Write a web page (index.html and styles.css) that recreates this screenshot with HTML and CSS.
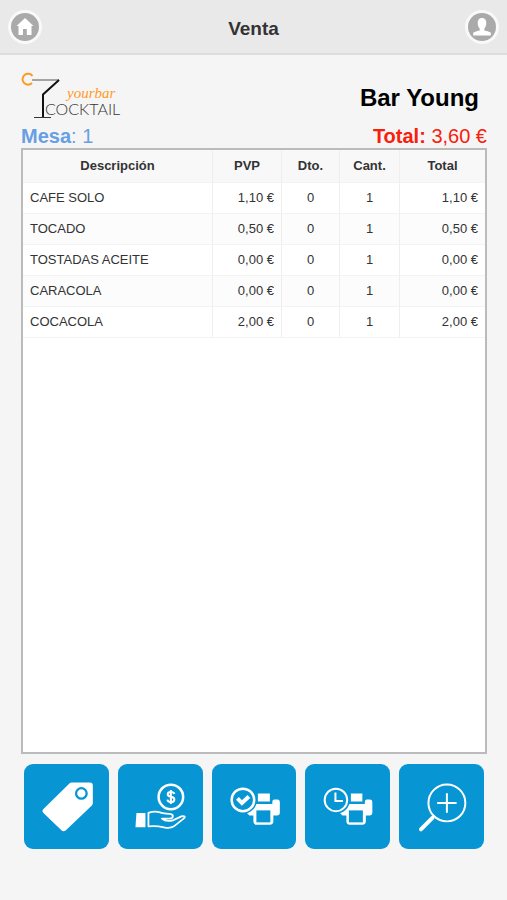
FILE: index.html
```html
<!DOCTYPE html>
<html lang="es">
<head>
    <meta charset="utf-8">
    <meta name="viewport" content="width=device-width, initial-scale=1">
    <title>Venta</title>
    <link rel="stylesheet" href="styles.css">
</head>
<body>
    <header class="top-bar">
        <a href="#" class="round-btn" aria-label="Inicio">
            <svg viewBox="0 0 34 34">
                <circle cx="17" cy="17" r="17" fill="#f9f9f9"/>
                <circle cx="17" cy="17" r="14" fill="#aaa"/>
                <path fill="#fff" d="M17 8 L25.500 16 H23.500 V25 H18.800 V19 H15 V25 H10.500 V16 H8.500 Z"/>
            </svg>
        </a>
        <h1>Venta</h1>
        <a href="#" class="round-btn" aria-label="Usuario">
            <svg viewBox="0 0 34 34">
                <circle cx="17" cy="17" r="17" fill="#f9f9f9"/>
                <circle cx="17" cy="17" r="14" fill="#aaa"/>
                <path fill="#fff" d="M17 8 C20 8 21.400 10 21.300 13 C21.200 16 20.300 17.500 19.300 18.600 V20.500 C22.500 21.300 25.600 21.900 25.800 23 V25.500 H8.200 V23 C8.400 21.900 11.500 21.300 14.700 20.500 V18.600 C13.700 17.500 12.800 16 12.700 13 C12.600 10 14 8 17 8 Z"/>
            </svg>
        </a>
    </header>

    <main class="sale">
        <div class="brand">
            <svg class="logo" viewBox="0 0 104 48" role="img" aria-label="Yourbar Cocktail">
                <path d="M11.500 4 A5.500 5.500 0 1 0 11 11" fill="none" stroke="#ff9a1f" stroke-width="2"/>
                <path d="M11 8 H38" fill="none" stroke="#555" stroke-width="1"/>
                <path d="M38 8 L22 22.500 V45" fill="none" stroke="#111" stroke-width="2"/>
                <path d="M13 45.500 H30" fill="none" stroke="#333" stroke-width="1"/>
                <text x="24" y="43" class="logo-name">COCKTAIL</text>
                <text x="46" y="26" class="logo-script">yourbar</text>
            </svg>
            <h2>Bar Young</h2>
        </div>

        <div class="summary">
            <div class="mesa"><b>Mesa</b>: 1</div>
            <div class="total"><b>Total:</b> 3,60 €</div>
        </div>

        <div class="lines">
            <table>
                <thead>
                    <tr>
                        <th class="col-desc">Descripción</th>
                        <th class="col-pvp">PVP</th>
                        <th class="col-dto">Dto.</th>
                        <th class="col-cant">Cant.</th>
                        <th class="col-total">Total</th>
                    </tr>
                </thead>
                <tbody>
                    <tr><td>CAFE SOLO</td><td>1,10 €</td><td>0</td><td>1</td><td>1,10 €</td></tr>
                    <tr><td>TOCADO</td><td>0,50 €</td><td>0</td><td>1</td><td>0,50 €</td></tr>
                    <tr><td>TOSTADAS ACEITE</td><td>0,00 €</td><td>0</td><td>1</td><td>0,00 €</td></tr>
                    <tr><td>CARACOLA</td><td>0,00 €</td><td>0</td><td>1</td><td>0,00 €</td></tr>
                    <tr><td>COCACOLA</td><td>2,00 €</td><td>0</td><td>1</td><td>2,00 €</td></tr>
                </tbody>
            </table>
        </div>

        <div class="actions">
            <button type="button" aria-label="Productos">
                <svg viewBox="0 0 85 85">
                    <path fill="#fff" d="M48 18.500 H66 Q69 18.500 69 21.500 V39 Q69 40.500 68 41.500 L42 66.500 Q39.500 68.500 37.500 66.500 L19.500 49 Q17.500 47 19.500 45 L45.500 19.500 Q46.500 18.500 48 18.500 Z"/>
                    <circle cx="57.500" cy="29.500" r="5.300" fill="#fff" stroke="#0795d4" stroke-width="2.300"/>
                </svg>
            </button>
            <button type="button" aria-label="Cobrar">
                <svg viewBox="0 0 85 85" fill="none" stroke="#fff">
                    <circle cx="53" cy="33" r="12.300" stroke-width="2.500"/>
                    <path stroke-width="2" d="M56.500 30 C56 28.300 54.700 28 53 28 C51 28 49.800 29 49.800 30.400 C49.800 34 56.500 31.800 56.500 35.500 C56.500 37.300 55 38.200 53 38.200 C51 38.200 49.800 37.300 49.500 35.700 M53 26 V40"/>
                    <path fill="#fff" stroke="none" d="M18.500 49 H27.500 V63.500 H17.500 Z"/>
                    <path stroke-width="1.800" stroke-linejoin="round" stroke-linecap="round" d="M30.500 49 C35 47.500 38.500 47.500 42 48.500 C45 50 48.500 49.500 52 50 C56 50.500 56 54.500 52 54.800 H44 C47 57.500 51 57.500 55 56.500 L63.500 52.500 C67 51.500 68 53 65.500 55 L56 62.500 C53 64.500 50 64.500 46 63.500 C40 62 36 62 30.500 62.500 Z"/>
                </svg>
            </button>
            <button type="button" aria-label="Imprimir cuenta">
                <svg viewBox="0 0 85 85">
                    <path fill="#fff" d="M46 29.500 H58 V37.500 H46 Z M43 40 H60.500 V37.500 Q60.500 35.500 62.500 35.500 H65.500 Q68 35.500 68 38 V49 Q68 51.500 65.500 51.500 H61.500 V57.500 Q61.500 61 58 61 H45 Q41.500 61 41.500 57.500 V51.500 H37.500 L35 49 Z"/>
                    <rect x="44.500" y="46.500" width="14" height="12" fill="#0795d4"/>
                    <circle cx="31" cy="36" r="14" fill="#0795d4"/>
                    <circle cx="31" cy="36" r="11.300" fill="none" stroke="#fff" stroke-width="2.500"/>
                    <path fill="none" stroke="#fff" stroke-width="4" d="M25.500 34.500 L30 39 L37 32.500"/>
                </svg>
            </button>
            <button type="button" aria-label="Imprimir pendiente">
                <svg viewBox="0 0 85 85">
                    <path fill="#fff" d="M46 29.500 H57.500 V37.500 H46 Z M43 40 H60 V37.500 Q60 35.500 62 35.500 H65 Q67.500 35.500 67.500 38 V49 Q67.500 51.500 65 51.500 H61 V57.500 Q61 61 57.500 61 H45 Q41.500 61 41.500 57.500 V51.500 H37.500 L35 49 Z"/>
                    <rect x="44" y="46.500" width="14" height="12" fill="#0795d4"/>
                    <circle cx="31" cy="36" r="14" fill="#0795d4"/>
                    <circle cx="31" cy="36" r="11.300" fill="none" stroke="#fff" stroke-width="2"/>
                    <path fill="none" stroke="#fff" stroke-width="2" d="M30.500 28.500 V37 H38"/>
                </svg>
            </button>
            <button type="button" aria-label="Ver detalle">
                <svg viewBox="0 0 85 85" fill="none" stroke="#fff" stroke-linecap="round">
                    <circle cx="48" cy="39" r="18.500" stroke-width="2"/>
                    <path stroke-width="2" d="M48 30 V48 M39 39 H57"/>
                    <path stroke-width="1.500" d="M35 52 L33 54"/>
                    <path stroke-width="4" d="M33.500 54 L22 65.500"/>
                </svg>
            </button>
        </div>
    </main>
</body>
</html>
```

FILE: styles.css
```css
* {
    box-sizing: border-box;
}

body {
    font-family: "Liberation Sans", Helvetica, Arial, sans-serif;
    background-color: #f5f5f5;
    color: #333;
    margin: 0;
    min-height: 100vh;
    display: flex;
    flex-direction: column;
}

h1, h2 {
    margin: 0;
}

/* Cabecera */
.top-bar {
    display: flex;
    align-items: center;
    justify-content: space-between;
    height: 55px;
    padding: 0 8px;
    background-color: #e9e9e9;
    border-bottom: 2px solid #ddd;
}

.top-bar h1 {
    font-size: 19px;
    line-height: 24px;
    padding-top: 4px;
}

.round-btn {
    width: 34px;
    height: 34px;
}

.round-btn svg {
    display: block;
    width: 100%;
    height: 100%;
}

/* Contenido */
.sale {
    flex: 1;
    display: flex;
    flex-direction: column;
    padding: 17px 20px 51px 21px;
}

.brand {
    display: flex;
    justify-content: space-between;
    align-items: center;
    padding-right: 8px;
}

.brand h2 {
    font-size: 24px;
    line-height: 28px;
    padding-top: 4px;
    color: #000;
}

.logo {
    width: 104px;
    height: 48px;
}

.logo-name {
    font-family: Lato, "Liberation Sans", sans-serif;
    font-weight: 300;
    font-size: 16px;
    fill: #333;
}

.logo-script {
    font-family: "Liberation Serif", serif;
    font-style: italic;
    font-size: 15px;
    fill: #ff9a1f;
}

.summary {
    display: flex;
    justify-content: space-between;
    font-size: 20px;
    line-height: 24px;
    padding-top: 4px;
}

.mesa {
    color: #689fe3;
}

.total {
    color: #f8200c;
}

/* Lineas de venta */
.lines {
    flex: 1;
    background-color: #fff;
    border: 2px solid #bbb;
}

.lines table {
    width: 100%;
    table-layout: fixed;
    border-collapse: separate;
    border-spacing: 0;
    font-size: 13px;
    line-height: 16px;
}

.lines th,
.lines td {
    height: 31px;
    padding: 0 7px;
    border-right: 1px solid #eee;
    border-bottom: 1px solid #f3f3f3;
    text-align: center;
}

.lines th {
    height: 33px;
    background-color: #f8f8f8;
}

.lines th:last-child,
.lines td:last-child {
    border-right: none;
}

.lines td:first-child {
    text-align: left;
}

.lines td:nth-child(2),
.lines td:last-child {
    text-align: right;
}

.lines tbody tr:nth-child(even) {
    background-color: #fcfcfc;
}

.col-desc { width: auto; }
.col-pvp { width: 69px; }
.col-dto { width: 58px; }
.col-cant { width: 60px; }
.col-total { width: 85px; }

/* Botones */
.actions {
    display: grid;
    grid-template-columns: repeat(5, 1fr);
    gap: 9px;
    padding: 10px 3px 0;
}

.actions button {
    padding: 0;
    border: none;
    border-radius: 9px;
    background-color: #0795d4;
    cursor: pointer;
}

.actions svg {
    display: block;
    width: 100%;
}
```
